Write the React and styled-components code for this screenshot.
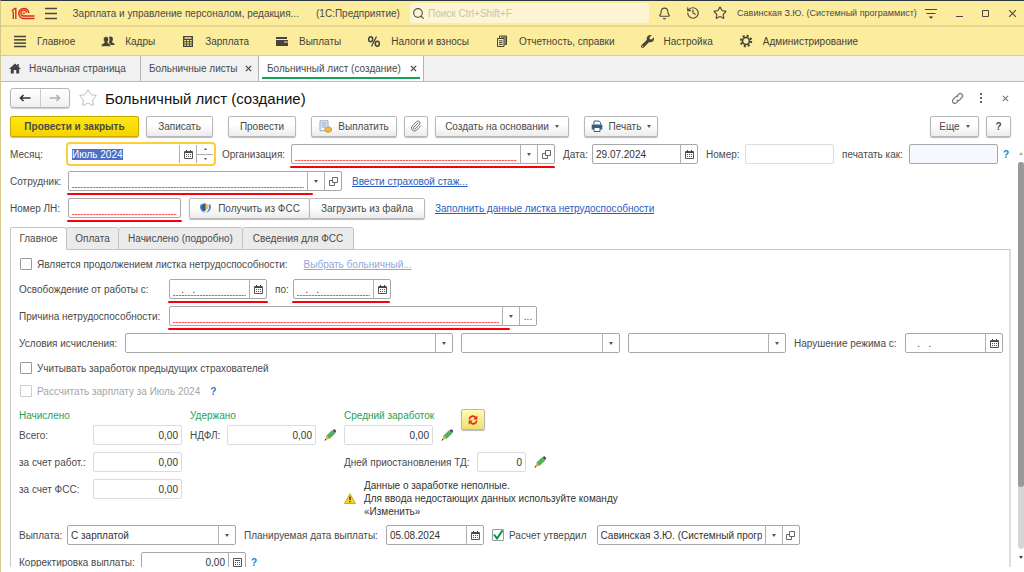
import React, { useEffect, useRef } from "react";
import styled, { createGlobalStyle, css } from "styled-components";
import { Bell, History, Paperclip, Search, Star } from "lucide-react";
import { FaWrench } from "react-icons/fa";

const GlobalStyle = createGlobalStyle`
  * {
    box-sizing: border-box;
  }

  body {
    margin: 0;
    background: #fff;
  }

  body, button, input, select {
    font-family: "Liberation Sans", Arial, sans-serif;
    font-size: 10px;
    color: #4a4a4a;
  }

  button, input, select {
    margin: 0;
    padding: 0;
    outline: none;
  }

  svg {
    flex: none;
    display: block;
  }
`;

/* ---------- window chrome ---------- */

const Window = styled.div`
  display: flex;
  flex-direction: column;
  height: 100vh;
  overflow: hidden;
  border-top: 1px solid #2c3840;
  border-left: 1px solid #d6c88a;
  padding-bottom: 5px;
`;

const TitleBar = styled.header`
  display: flex;
  align-items: center;
  flex: none;
  height: 26px;
  padding: 0 0 0 10px;
  background: #fbec9e;
  border-bottom: 2px solid #e6d68b;
`;

const IconButton = styled.button`
  display: flex;
  align-items: center;
  justify-content: center;
  flex: none;
  width: ${(p) => p.$w || 27}px;
  height: 20px;
  border: 0;
  background: none;
  color: ${(p) => p.$color || "#4d4a3c"};
`;

const AppTitle = styled.div`
  width: ${(p) => p.$w}px;
  white-space: nowrap;
`;

const SearchBox = styled.label`
  display: flex;
  align-items: center;
  gap: 3px;
  flex: 1;
  height: 20px;
  padding-left: 2px;
  border-radius: 3px;
  background: #fdf5d3;
`;

const SearchInput = styled.input`
  flex: 1;
  min-width: 0;
  border: 0;
  background: none;

  &::placeholder {
    color: #c9c3ab;
    opacity: 1;
  }
`;

const UserName = styled.div`
  font-size: 9px;
  width: 182px;
  padding-left: 4px;
  white-space: nowrap;
`;

const Sections = styled.nav`
  display: flex;
  align-items: center;
  flex: none;
  gap: 26px;
  height: 29px;
  padding-left: 12px;
  background: #fbec9e;
  border-bottom: 1px solid #d9cb8c;
`;

const Section = styled.a`
  display: flex;
  align-items: center;
  gap: 10px;
  color: #45433a;
  text-decoration: none;
  white-space: nowrap;
`;

const WindowTabs = styled.div`
  display: flex;
  flex: none;
  height: 26px;
  background: #f1f1f1;
  border-bottom: 1px solid #bdbdbd;
`;

const WindowTab = styled.button`
  position: relative;
  display: flex;
  align-items: center;
  gap: ${(p) => p.$gap || 6}px;
  width: ${(p) => p.$w}px;
  padding: 0 6px 0 8px;
  border: 0;
  border-right: 1px solid #b3b3b3;
  background: ${(p) => (p.$active ? "#fff" : "none")};
  white-space: nowrap;

  ${(p) =>
    p.$active &&
    css`
      &::after {
        content: "";
        position: absolute;
        left: 3px;
        right: 3px;
        bottom: 2px;
        height: 2px;
        background: #17a355;
      }
    `}
`;

const TabLabel = styled.span`
  flex: 1;
  text-align: left;
`;

/* ---------- form header ---------- */

const FormHeader = styled.div`
  display: flex;
  align-items: center;
  flex: none;
  height: 32px;
  padding: 0 7px 0 9px;
`;

const NavButtons = styled.div`
  display: flex;
  width: 60px;
  height: 20px;
  border: 1px solid #b5b5b5;
  border-radius: 3px;
  background: linear-gradient(#fff, #f0f0f0);
  box-shadow: 0 1px 1px #ccc;
`;

const NavButton = styled.button`
  display: flex;
  align-items: center;
  justify-content: center;
  flex: 1;
  border: 0;
  background: none;
  color: ${(p) => (p.disabled ? "#b0b0b0" : "#333")};

  & + & {
    border-left: 1px solid #ccc;
  }
`;

const FormTitle = styled.h1`
  flex: 1;
  margin: 0;
  font-size: 15px;
  font-weight: normal;
  color: #111;
`;

const Toolbar = styled.div`
  display: flex;
  align-items: center;
  flex: none;
  gap: 7px;
  height: 24px;
  padding: 0 13px 0 9px;
`;

const Group = styled.div`
  display: flex;
  gap: 7px;
  margin-right: ${(p) => (p.$last ? 0 : 8)}px;
  ${(p) => p.$grow && "flex: 1;"}
`;

const Button = styled.button`
  display: flex;
  align-items: center;
  justify-content: center;
  gap: 6px;
  width: ${(p) => p.$w}px;
  height: 21px;
  border: 1px solid ${(p) => (p.$primary ? "#c9ab00" : "#b8b8b8")};
  border-radius: 2px;
  background: ${(p) =>
    p.$primary
      ? "linear-gradient(#ffe60f, #f5d400)"
      : "linear-gradient(#ffffff 40%, #ececec)"};
  box-shadow: 0 1px 1px #bbb;
  font-weight: ${(p) => (p.$primary || p.$bold ? "bold" : "normal")};
  white-space: nowrap;
`;

const JoinedButtons = styled.div`
  display: flex;
  margin-left: 8px;

  ${Button} + ${Button} {
    margin-left: -1px;
  }
`;

const Caret = styled.span`
  border: 2px solid transparent;
  border-top: 3px solid #555;
  border-bottom: 0;
`;

/* ---------- form body ---------- */

const Scroller = styled.main`
  display: flex;
  flex: 1;
  min-height: 0;
`;

const FormBody = styled.div`
  flex: 1;
  min-width: 0;
  overflow: hidden;
  padding: 6px 0 0 9px;
`;

const ScrollBar = styled.div`
  display: flex;
  flex-direction: column;
  align-items: center;
  flex: none;
  width: 13px;
  padding: 14px 0 8px 6px;
  gap: 7px;
`;

const ScrollArrow = styled.span`
  border: 2px solid transparent;
  ${(p) =>
    p.$up
      ? "border-bottom: 3px solid #aaa; border-top: 0;"
      : "border-top: 3px solid #444; border-bottom: 0;"}
`;

const Track = styled.div`
  flex: 1;
  width: 6px;
  border-radius: 3px;
  background: #d6d6d6;
`;

const Thumb = styled.div`
  height: 84%;
  border-radius: 3px;
  background: #999;
`;

const Rows = styled.div`
  display: flex;
  flex-direction: column;
  gap: 7px;
`;

const Row = styled.div`
  display: flex;
  align-items: center;
  height: ${(p) => p.$h || 20}px;
`;

const Label = styled.label`
  flex: none;
  width: ${(p) => p.$w}px;
  margin-left: ${(p) => (p.$first ? 0 : 8)}px;
  white-space: nowrap;
`;

const Field = styled.div`
  position: relative;
  display: flex;
  flex: none;
  width: ${(p) => p.$w}px;
  height: 20px;
  margin-left: ${(p) => p.$gap || 0}px;
  border: 1px solid ${(p) => (p.$readOnly ? "#dcdcdc" : "#a8a8a8")};
  border-radius: 2px;
  background: ${(p) => p.$bg || "#fff"};

  ${(p) =>
    p.$focused &&
    css`
      border-color: #fff;
      box-shadow: 0 0 0 2px #fccf3a;
    `}

  /* marker stroke under the fields that must be filled in */
  ${(p) =>
    p.$mark &&
    css`
      &::after {
        content: "";
        position: absolute;
        left: -2px;
        bottom: -5px;
        width: ${p.$mark}px;
        height: 2px;
        border-radius: 1px;
        background: #f8000c;
      }
    `}
`;

const control = css`
  flex: 1;
  min-width: 0;
  padding: 0 3px;
  border: 0;
  color: #333;
  text-align: ${(p) => (p.$right ? "right" : "left")};
  background: ${(p) =>
    p.$required
      ? "repeating-linear-gradient(90deg, #f55 0 2px, #fbb 2px 3px) 3px 15px / calc(100% - 6px) 1px no-repeat"
      : "none"};
`;

const Input = styled.input`
  ${control}
  white-space: pre;

  &::selection {
    background: #4f6fc6;
    color: #fff;
  }
`;

const Select = styled.select`
  ${control}
  appearance: none;
  overflow: hidden;
  text-overflow: clip;
`;

const Cell = styled.button`
  display: flex;
  align-items: center;
  justify-content: center;
  flex: none;
  width: 17px;
  border: 0;
  border-left: 1px solid #b0b0b0;
  background: none;
`;

const ArrowCell = styled(Cell).attrs({ as: "span" })`
  pointer-events: none;
`;

const Spinner = styled.div`
  display: flex;
  flex-direction: column;
  width: 17px;
  border-left: 1px solid #b0b0b0;
`;

const SpinButton = styled.button`
  display: flex;
  align-items: center;
  justify-content: center;
  flex: 1;
  border: 0;
  background: none;

  & + & {
    border-top: 1px solid #b0b0b0;
  }
`;

const Link = styled.a`
  margin-left: ${(p) => p.$gap || 10}px;
  color: ${(p) => (p.$muted ? "#8ea9dd" : "#2a5cbf")};
  text-decoration: underline;
  white-space: nowrap;
`;

const Hint = styled.button`
  margin-left: ${(p) => p.$gap || 5}px;
  border: 0;
  background: none;
  color: #1a7fc4;
  font-weight: bold;
`;

const Tabs = styled.div`
  display: flex;
  margin-top: 9px;
`;

const Tab = styled.button`
  width: ${(p) => p.$w}px;
  height: 23px;
  margin: 0 -1px -1px 0;
  border: 1px solid #c3c3c3;
  border-radius: 3px 3px 0 0;
  background: #ebebeb;
  white-space: nowrap;

  &[aria-selected="true"] {
    position: relative;
    border-bottom-color: #fff;
    background: #fff;
  }
`;

const Panel = styled.section`
  padding: 6px 8px 0 8px;
  border: 1px solid #c8c8c8;
  border-right: 2px solid #dedede;
`;

const CheckLabel = styled.label`
  display: flex;
  align-items: center;
  gap: 5px;
  margin-left: ${(p) => p.$gap || 1}px;
  color: ${(p) => (p.$muted ? "#a6a6a6" : "inherit")};
  white-space: nowrap;
`;

const Check = styled.input`
  appearance: none;
  width: 12px;
  height: 12px;
  border: 1px solid ${(p) => (p.disabled ? "#ccc" : "#999")};
  border-radius: 1px;
  background: #fff;

  &:checked {
    background: url("data:image/svg+xml,%3Csvg xmlns='http://www.w3.org/2000/svg' viewBox='0 0 10 10'%3E%3Cpath d='M1 4.500l3 4L9.500 .5' fill='none' stroke='%2300964a' stroke-width='2'/%3E%3C/svg%3E");
  }
`;

const Totals = styled.div`
  display: flex;
  align-items: flex-start;
`;

const TotalsColumn = styled(Rows)`
  flex: none;
  width: ${(p) => p.$w}px;
`;

const Heading = styled.h2`
  height: 19px;
  margin: 0 0 -7px;
  line-height: 19px;
  font-size: 10px;
  font-weight: normal;
  color: #1f9f54;
`;

const AverageTop = styled.div`
  display: flex;
  align-items: flex-start;
  gap: 4px;
`;

const RefreshButton = styled(Button)`
  margin-top: 3px;
  background: linear-gradient(#fffbb0, #f0e070);
`;

const PencilButton = styled(IconButton)`
  margin-left: 4px;
`;

const Warning = styled.div`
  display: flex;
  align-items: center;
  gap: 8px;
  line-height: 13px;
  color: #333;
`;

/* ---------- icons ---------- */

const Logo = () => (
  <svg width="24" height="13" viewBox="0 0 24 13" fill="none" stroke="#dc2a23">
    <path d="M.8 4.200L3.600 1.500H4.800V12M2.300 4.500V12" strokeWidth="1.400" />
    <path d="M17.800 6A5 5 0 1 0 12.800 11.400H23.500" strokeWidth="1.500" />
    <path d="M15.600 5.800A2.900 2.900 0 1 0 12.800 9H23.500" strokeWidth="1.300" />
    <circle cx="12.800" cy="6.200" r=".9" strokeWidth=".8" />
  </svg>
);

const Burger = ({ rows = 3, w = 12 }) => (
  <svg width="14" height="13" viewBox="0 0 14 13" stroke="currentColor" strokeWidth="1.500">
    {Array.from({ length: rows }, (_, i) => (
      <path key={i} d={`M1 ${1.5 + (i * 10) / (rows - 1)}h${w}`} />
    ))}
  </svg>
);

const PeopleIcon = () => (
  <svg width="14" height="13" viewBox="0 0 14 13" fill="#45433a">
    <path d="M9.500 1.500c3 0 3 4 1.300 5.200 0 1 3 1 3 3.300H9.500L7.800 7.500C8.800 6 9 3.500 7.800 2.300c.4-.5 1-.8 1.700-.8z" />
    <path d="M5 1.500c3.200 0 3 4.200 1.500 5.500 0 1.300 3.300 1.300 3.300 4.500H.3c0-3.200 3.200-3.200 3.200-4.500C2 5.700 2 1.500 5 1.500z" stroke="#fbec9e" strokeWidth=".6" />
  </svg>
);

const CalcIcon = () => (
  <svg width="14" height="13" viewBox="0 0 14 13">
    <path
      fill="#45433a"
      fillRule="evenodd"
      d="M2 1h10v11H2zM3.500 2.200v1.600h7V2.200zM3.200 5v1.300h2V5zM6 5v1.300h2V5zM8.800 5v1.300h2V5zM3.200 7.200v1.300h2V7.200zM6 7.200v1.300h2V7.200zM8.800 7.200v1.300h2V7.200zM3.200 9.400v1.300h2V9.400zM6 9.400v1.300h2V9.400zM8.800 9.400v1.300h2V9.400z"
    />
  </svg>
);

const CardIcon = () => (
  <svg width="14" height="13" viewBox="0 0 14 13" fill="#45433a">
    <path d="M1 2h11v2H1zM1 5h12v6H1z" />
    <path d="M9 7h4" stroke="#fbec9e" />
  </svg>
);

const PercentIcon = () => (
  <svg width="14" height="13" viewBox="0 0 14 13" fill="none" stroke="#45433a">
    <ellipse cx="3.700" cy="4.200" rx="2" ry="2.500" strokeWidth="1.500" />
    <ellipse cx="10.300" cy="8.800" rx="2" ry="2.500" strokeWidth="1.500" />
    <path d="M9.500 1.500L4.500 11.500" strokeWidth="1.200" />
  </svg>
);

const ReportIcon = () => (
  <svg width="14" height="13" viewBox="0 0 14 13" fill="none" stroke="#45433a">
    <path d="M4.500 3V1h7v8.500h-2M2.500 3.500h6.500v8H2.500z M6 2.200h4.200v7M4 5.800h3.500M4 7.600h3.500M4 9.400h3.500" />
  </svg>
);

const GearIcon = () => (
  <svg width="14" height="14" viewBox="0 0 14 14" fill="none" stroke="#45433a">
    <circle cx="7" cy="7" r="3.500" strokeWidth="1.700" />
    <circle cx="7" cy="7" r="5.200" strokeWidth="2" strokeDasharray="2.040 2.040" />
  </svg>
);

const HomeIcon = () => (
  <svg width="12" height="11" viewBox="0 0 12 11" fill="#444">
    <path d="M6 .5L0 6h1.800v4.500h3V7h2.400v3.500h3V6H12L9.800 4V1H8.300v1.600z" />
  </svg>
);

const Cross = ({ size = 7, width = 1.5 }) => (
  <svg width={size} height={size} viewBox="0 0 8 8" stroke="currentColor" strokeWidth={width}>
    <path d="M1 1l6 6M7 1L1 7" />
  </svg>
);

const Arrow = ({ back }) => (
  <svg width="12" height="8" viewBox="0 0 12 8" fill="none" stroke="currentColor" strokeWidth="1.600">
    <path d={back ? "M11.500 4H1.500M4.500 1L1.500 4l3 3" : "M.5 4h10M7.500 1l3 3-3 3"} />
  </svg>
);

const CalendarIcon = () => (
  <svg width="9" height="9" viewBox="0 0 9 9" fill="none" stroke="#555">
    <path d="M.5 1.500h8v7h-8z" />
    <path d="M1 2.500h7M2.500 0v2M6.500 0v2" stroke="#444" />
    <path d="M2 4.500h5M2 6.500h5" strokeDasharray="1 1" />
  </svg>
);

const OpenIcon = () => (
  <svg width="9" height="9" viewBox="0 0 9 9" fill="none" stroke="#666">
    <path d="M3.500.5h5v5h-5zM3.500 3.500h-3v5h5v-3" />
  </svg>
);

const PencilIcon = () => (
  <svg width="13" height="12" viewBox="0 0 13 12">
    <path d="M7.800 1.800L10.700 4.700 5.500 9.600 2.700 6.800z" fill="#4db553" stroke="#35893d" strokeWidth=".5" />
    <path d="M8.300 1.400L9.600.4c1.200-.6 3 1.200 2.400 2.400L11 4.200z" fill="#46506c" />
    <path d="M2.700 6.800L5.500 9.600 1 11.300z" fill="#e3a750" />
    <path d="M.5 11.700l.8-2 1.100 1.200z" fill="#222" />
  </svg>
);

const RefreshIcon = () => (
  <svg width="10" height="10" viewBox="0 0 10 10" fill="none" stroke="#e5251c" strokeWidth="1.700">
    <path d="M1.300 4.500A3.500 3.500 0 0 1 7.500 2.500M8.700 5.500A3.500 3.500 0 0 1 2.500 7.500" />
    <path d="M9.300.5v4H5.300zM.7 9.500v-4h4z" fill="#e5251c" stroke="none" />
  </svg>
);

const WarningIcon = () => (
  <svg width="12" height="11" viewBox="0 0 12 11">
    <path d="M6 .7L11.500 10.500H.5z" fill="#f7d51d" stroke="#b99a1c" strokeWidth=".8" strokeLinejoin="round" />
    <path d="M6 3.500v3.500M6 8v1.300" stroke="#222" strokeWidth="1.300" />
  </svg>
);

const PayIcon = () => (
  <svg width="13" height="13" viewBox="0 0 13 13">
    <path d="M1 .8h8v10H1z" fill="#eef4fa" stroke="#7795b5" strokeWidth=".8" />
    <path d="M2.500 3h5M2.500 5h5M2.500 7h4" stroke="#6b96c4" strokeWidth=".9" />
    <path d="M6 8l3-1.500L12.500 8v3L9 12.700 6 11z" fill="#f0b73b" stroke="#c77f24" strokeWidth=".6" />
  </svg>
);

const PrinterIcon = () => (
  <svg width="12" height="12" viewBox="0 0 12 12">
    <path d="M3 4.500V1h5l1.500 1.500v2" fill="#fff" stroke="#35607f" />
    <path d="M.7 4.500h10.600v5H.7z" fill="#35607f" />
    <path d="M3 7.500h6v4H3z" fill="#fff" stroke="#35607f" />
  </svg>
);

const FssIcon = () => (
  <svg width="13" height="12" viewBox="0 0 13 12">
    <path d="M1.500 2.500C0 5.500 1.500 9.500 6 11 3.500 8.500 2.300 6 3.300 2zM11.500 2.500c1.500 3 0 7-4.500 8.500 2.500-2.500 3.700-5 2.700-9z" fill="#5b92c4" />
    <circle cx="6.500" cy="4.800" r="3" fill="#f1bd4e" />
    <path d="M6.500 1.200a3.600 3.600 0 0 0 0 8z" fill="#2a5c96" />
  </svg>
);

const SettingsIcon = () => (
  <svg width="14" height="13" viewBox="0 0 14 13" stroke="#4d4a3c">
    <path d="M1 2.500h12M2.500 6.500h9" strokeWidth="1.200" />
    <path d="M4.800 9.500h4.400L7 11.800z" fill="#333" stroke="none" />
  </svg>
);

/* ---------- field kinds ---------- */

const DateField = ({ id, value = "   .   .", w = 98, label, mark, required }) => (
  <Field $w={w} $mark={mark}>
    <Input id={id} defaultValue={value} $required={required} />
    <Cell aria-label={`Календарь: ${label}`}>
      <CalendarIcon />
    </Cell>
  </Field>
);

const Combo = ({ id, value = "", w, gap, mark, required, label, extra }) => (
  <Field $w={w} $gap={gap} $mark={mark}>
    <Select id={id} aria-label={label} defaultValue={value} $required={required}>
      <option value={value}>{value}</option>
    </Select>
    <ArrowCell>
      <Caret />
    </ArrowCell>
    {extra === "open" && (
      <Cell aria-label="Открыть">
        <OpenIcon />
      </Cell>
    )}
    {extra === "more" && <Cell aria-label="Выбрать">...</Cell>}
  </Field>
);

const Amount = ({ id, value = "0,00", w = 89 }) => (
  <Field $w={w} $readOnly>
    <Input id={id} value={value} readOnly $right />
  </Field>
);

const Edit = ({ label }) => (
  <PencilButton $w={20} aria-label={label}>
    <PencilIcon />
  </PencilButton>
);

const sections = [
  ["Главное", <Burger rows={4} />],
  ["Кадры", <PeopleIcon />],
  ["Зарплата", <CalcIcon />],
  ["Выплаты", <CardIcon />],
  ["Налоги и взносы", <PercentIcon />],
  ["Отчетность, справки", <ReportIcon />],
  ["Настройка", <FaWrench size={13} />],
  ["Администрирование", <GearIcon />],
];

const tabs = [
  ["Главное", 57],
  ["Оплата", 53],
  ["Начислено (подробно)", 125],
  ["Сведения для ФСС", 112],
];

const Header = () => (
  <>
    <TitleBar>
      <Logo />
      <IconButton $w={32} aria-label="Меню">
        <Burger />
      </IconButton>
      <AppTitle $w={249}>&nbsp;&nbsp;Зарплата и управление персоналом, редакция...</AppTitle>
      <AppTitle $w={94}>(1С:Предприятие)</AppTitle>
      <SearchBox>
        <Search size={13} strokeWidth={2} />
        <SearchInput aria-label="Поиск" placeholder="Поиск Ctrl+Shift+F" />
      </SearchBox>
      <IconButton $w={30} aria-label="Оповещения">
        <Bell size={13} strokeWidth={2} />
      </IconButton>
      <IconButton aria-label="История">
        <History size={14} strokeWidth={2} />
      </IconButton>
      <IconButton aria-label="Избранное">
        <Star size={14} strokeWidth={2} />
      </IconButton>
      <UserName>Савинская З.Ю. (Системный программист)</UserName>
      <IconButton $w={32} aria-label="Настройки">
        <SettingsIcon />
      </IconButton>
      <IconButton $w={24} aria-label="Свернуть">
        <svg width="9" height="9" stroke="currentColor">
          <path d="M1 7.500h7" />
        </svg>
      </IconButton>
      <IconButton $w={29} aria-label="Развернуть">
        <svg width="9" height="9" fill="none" stroke="currentColor">
          <path d="M1.500 1.500h6v6h-6z" />
        </svg>
      </IconButton>
      <IconButton $w={24} aria-label="Закрыть">
        <Cross size={9} width={1} />
      </IconButton>
    </TitleBar>

    <Sections>
      {sections.map(([name, icon]) => (
        <Section key={name} href="#">
          {icon}
          {name}
        </Section>
      ))}
    </Sections>

    <WindowTabs>
      <WindowTab $w={140} $gap={8}>
        <HomeIcon />
        <TabLabel>Начальная страница</TabLabel>
      </WindowTab>
      <WindowTab $w={118}>
        <TabLabel>Больничные листы</TabLabel>
        <Cross />
      </WindowTab>
      <WindowTab $w={165} $active>
        <TabLabel>Больничный лист (создание)</TabLabel>
        <Cross />
      </WindowTab>
    </WindowTabs>
  </>
);

const Commands = () => (
  <>
    <FormHeader>
      <NavButtons>
        <NavButton aria-label="Назад">
          <Arrow back />
        </NavButton>
        <NavButton aria-label="Вперед" disabled>
          <Arrow />
        </NavButton>
      </NavButtons>
      <IconButton $w={35} $color="#a9aeb5" aria-label="В избранное">
        <Star size={20} strokeWidth={1} />
      </IconButton>
      <FormTitle>Больничный лист (создание)</FormTitle>
      <IconButton $w={24} $color="#777" aria-label="Ссылка">
        <svg width="13" height="13" viewBox="0 0 13 13" fill="none" stroke="currentColor" strokeWidth="1.200">
          <path d="M5.500 4.500l2-2.200a2.300 2.300 0 0 1 3.400 3.200L8.700 7.800a2.200 2.200 0 0 1-3 .2M7.500 8.500l-2 2.200a2.300 2.300 0 0 1-3.400-3.200l2.200-2.300a2.200 2.200 0 0 1 3-.2" />
        </svg>
      </IconButton>
      <IconButton $w={24} aria-label="Еще">
        <svg width="3" height="10" fill="#666">
          <path d="M0 0h2v2H0zM0 4h2v2H0zM0 8h2v2H0z" />
        </svg>
      </IconButton>
      <IconButton $w={24} $color="#777" aria-label="Закрыть форму">
        <Cross width={1.3} />
      </IconButton>
    </FormHeader>

    <Toolbar>
      <Group>
        <Button $w={129} $primary>
          Провести и закрыть
        </Button>
        <Button $w={67}>Записать</Button>
      </Group>
      <Group>
        <Button $w={68}>Провести</Button>
      </Group>
      <Group>
        <Button $w={86}>
          <PayIcon />
          Выплатить
        </Button>
        <Button $w={24} aria-label="Файлы">
          <Paperclip size={12} strokeWidth={1.5} />
        </Button>
        <Button $w={134}>
          Создать на основании
          <Caret />
        </Button>
      </Group>
      <Group $grow>
        <Button $w={74}>
          <PrinterIcon />
          Печать
          <Caret />
        </Button>
      </Group>
      <Group $last>
        <Button $w={49}>
          Еще
          <Caret />
        </Button>
        <Button $w={25} $bold>
          ?
        </Button>
      </Group>
    </Toolbar>
  </>
);

const DocumentFields = () => {
  const month = useRef(null);

  useEffect(() => {
    month.current.focus();
    month.current.select();
  }, []);

  return (
    <Rows>
      <Row>
        <Label $w={58} $first htmlFor="month">
          Месяц:
        </Label>
        <Field $w={146} $focused>
          <Input id="month" ref={month} defaultValue="Июль 2024" />
          <Cell aria-label="Выбрать месяц">
            <CalendarIcon />
          </Cell>
          <Spinner>
            <SpinButton aria-label="Следующий месяц">
              <svg width="3" height="2" fill="#555">
                <path d="M0 2L1.500 0 3 2z" />
              </svg>
            </SpinButton>
            <SpinButton aria-label="Предыдущий месяц">
              <svg width="3" height="2" fill="#555">
                <path d="M0 0l1.500 2L3 0z" />
              </svg>
            </SpinButton>
          </Spinner>
        </Field>
        <Label $w={69} htmlFor="org">
          Организация:
        </Label>
        <Combo id="org" w={264} mark={265} required extra="open" />
        <Label $w={29} htmlFor="date">
          Дата:
        </Label>
        <DateField id="date" label="дата" value="29.07.2024" w={106} />
        <Label $w={39} htmlFor="number">
          Номер:
        </Label>
        <Field $w={89} $readOnly>
          <Input id="number" />
        </Field>
        <Label $w={67} htmlFor="print-as">
          печатать как:
        </Label>
        <Field $w={89} $bg="#f7f8fe">
          <Input id="print-as" />
        </Field>
        <Hint aria-label="Справка о номере">?</Hint>
      </Row>
      <Row>
        <Label $w={58} $first htmlFor="employee">
          Сотрудник:
        </Label>
        <Combo id="employee" w={274} mark={246} required extra="open" />
        <Link href="#">Ввести страховой стаж...</Link>
      </Row>
      <Row>
        <Label $w={58} $first htmlFor="ln">
          Номер ЛН:
        </Label>
        <Field $w={113} $mark={115}>
          <Input id="ln" $required />
        </Field>
        <JoinedButtons>
          <Button $w={121}>
            <FssIcon />
            Получить из ФСС
          </Button>
          <Button $w={116}>Загрузить из файла</Button>
        </JoinedButtons>
        <Link href="#">Заполнить данные листка нетрудоспособности</Link>
      </Row>
    </Rows>
  );
};

const MainPanel = () => (
  <Panel role="tabpanel">
    <Rows>
      <Row $h={16}>
        <CheckLabel>
          <Check type="checkbox" />
          Является продолжением листка нетрудоспособности:
        </CheckLabel>
        <Link href="#" $gap={16} $muted>
          Выбрать больничный...
        </Link>
      </Row>
      <Row>
        <Label $w={150} $first htmlFor="from">
          Освобождение от работы с:
        </Label>
        <DateField id="from" label="с" mark={100} required />
        <Label $w={18} htmlFor="to">
          по:
        </Label>
        <DateField id="to" label="по" mark={98} required />
      </Row>
      <Row>
        <Label $w={150} $first htmlFor="reason">
          Причина нетрудоспособности:
        </Label>
        <Combo id="reason" w={368} mark={342} required extra="more" />
      </Row>
      <Row>
        <Label $w={106} $first htmlFor="terms">
          Условия исчисления:
        </Label>
        <Combo id="terms" w={328} />
        <Combo label="Условие 2" w={159} gap={8} />
        <Combo label="Условие 3" w={158} gap={8} />
        <Label $w={111} htmlFor="violation">
          Нарушение режима с:
        </Label>
        <DateField id="violation" label="нарушение режима" />
      </Row>
      <Row $h={16}>
        <CheckLabel>
          <Check type="checkbox" />
          Учитывать заработок предыдущих страхователей
        </CheckLabel>
      </Row>
      <Row $h={16}>
        <CheckLabel $muted>
          <Check type="checkbox" disabled />
          Рассчитать зарплату за Июль 2024
        </CheckLabel>
        <Hint $gap={10} aria-label="Справка о расчете">
          ?
        </Hint>
      </Row>

      <Totals>
        <TotalsColumn $w={171}>
          <Heading>Начислено</Heading>
          <Row>
            <Label $w={74} $first htmlFor="total">
              Всего:
            </Label>
            <Amount id="total" />
          </Row>
          <Row>
            <Label $w={74} $first htmlFor="employer">
              за счет работ.:
            </Label>
            <Amount id="employer" />
          </Row>
          <Row>
            <Label $w={74} $first htmlFor="fss">
              за счет ФСС:
            </Label>
            <Amount id="fss" />
          </Row>
        </TotalsColumn>
        <TotalsColumn $w={154}>
          <Heading>Удержано</Heading>
          <Row>
            <Label $w={37} $first htmlFor="ndfl">
              НДФЛ:
            </Label>
            <Amount id="ndfl" />
            <Edit label="Изменить НДФЛ" />
          </Row>
        </TotalsColumn>
        <Rows>
          <AverageTop>
            <Rows>
              <Heading as="label" htmlFor="average">
                Средний заработок
              </Heading>
              <Row>
                <Amount id="average" />
                <Edit label="Изменить средний заработок" />
              </Row>
            </Rows>
            <RefreshButton $w={24} aria-label="Пересчитать">
              <RefreshIcon />
            </RefreshButton>
          </AverageTop>
          <Row>
            <Label $w={133} $first htmlFor="days">
              Дней приостановления ТД:
            </Label>
            <Amount id="days" value="0" w={49} />
            <Edit label="Изменить дни" />
          </Row>
          <Warning>
            <WarningIcon />
            <div>
              Данные о заработке неполные.
              <br />
              Для ввода недостающих данных используйте команду
              <br />
              «Изменить»
            </div>
          </Warning>
        </Rows>
      </Totals>

      <Row>
        <Label $w={48} $first htmlFor="payment">
          Выплата:
        </Label>
        <Combo id="payment" value="С зарплатой" w={169} />
        <Label $w={142} htmlFor="payday">
          Планируемая дата выплаты:
        </Label>
        <DateField id="payday" label="выплата" value="05.08.2024" />
        <CheckLabel $gap={8}>
          <Check type="checkbox" defaultChecked />
          Расчет утвердил
        </CheckLabel>
        <Combo label="Расчет утвердил" value="Савинская З.Ю. (Системный программист)" w={203} gap={10} extra="open" />
      </Row>
      <Row>
        <Label $w={122} $first htmlFor="correction">
          Корректировка выплаты:
        </Label>
        <Field $w={105}>
          <Input id="correction" defaultValue="0,00" $right />
          <Cell aria-label="Калькулятор">
            <svg width="9" height="9" fill="none" stroke="#555">
              <path d="M.5.5h8v8h-8zM2 2.500h5" />
              <path d="M2 4.500h5M2 6.500h5" strokeDasharray="1 1" />
            </svg>
          </Cell>
        </Field>
        <Hint aria-label="Справка о корректировке">?</Hint>
      </Row>
    </Rows>
  </Panel>
);

export default function App() {
  return (
    <Window>
      <GlobalStyle />
      <Header />
      <Commands />
      <Scroller>
        <FormBody>
          <DocumentFields />
          <Tabs role="tablist">
            {tabs.map(([name, width], i) => (
              <Tab key={name} role="tab" aria-selected={i === 0} $w={width}>
                {name}
              </Tab>
            ))}
          </Tabs>
          <MainPanel />
        </FormBody>
        <ScrollBar>
          <ScrollArrow $up />
          <Track>
            <Thumb />
          </Track>
          <ScrollArrow />
        </ScrollBar>
      </Scroller>
    </Window>
  );
}
